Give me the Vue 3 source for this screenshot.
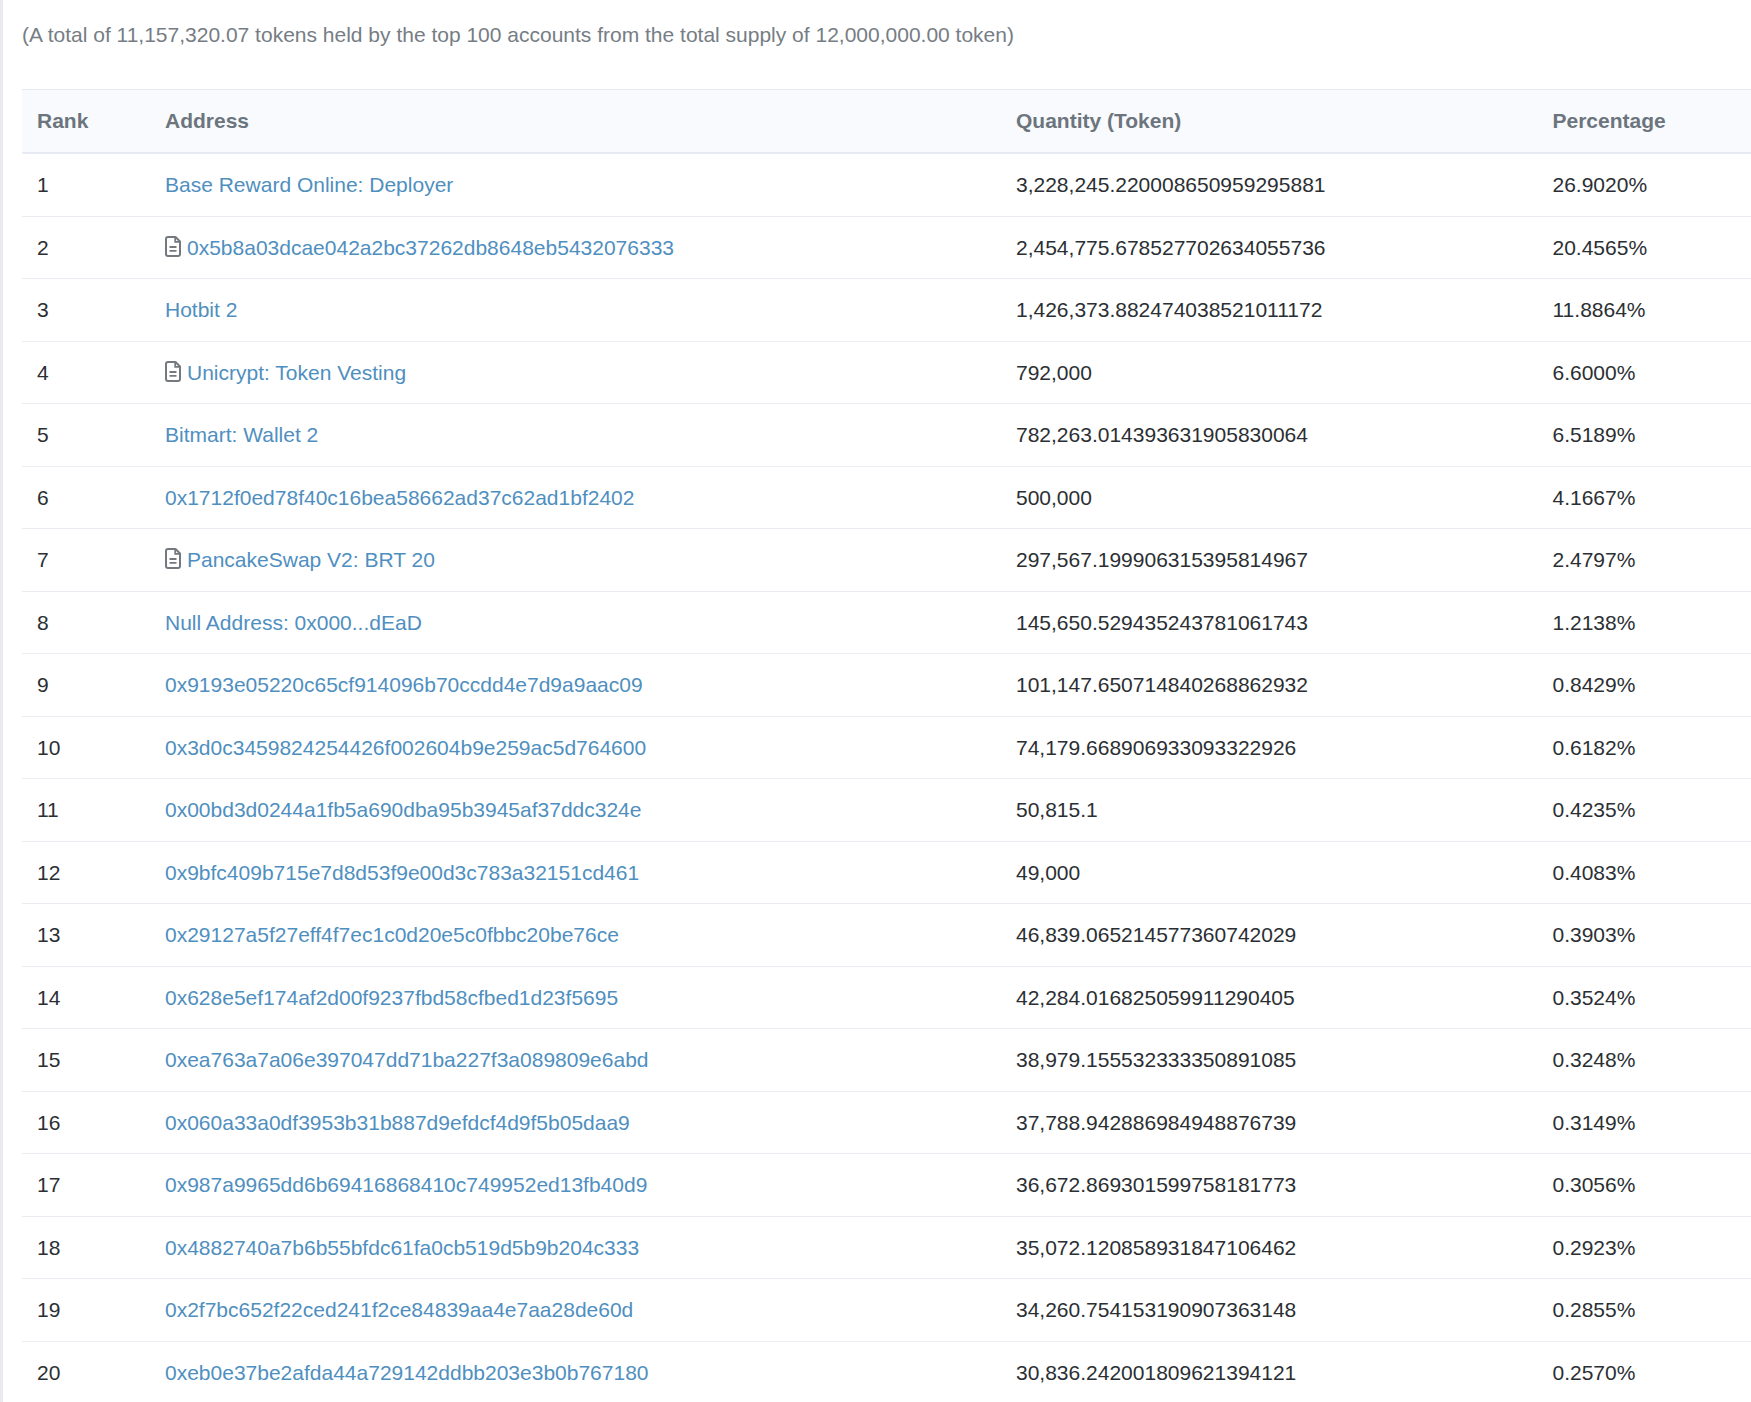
<template>
  <div class="page">
    <p class="summary">(A total of 11,157,320.07 tokens held by the top 100 accounts from the total supply of 12,000,000.00 token)</p>
    <table class="holders">
      <colgroup>
        <col class="col-rank" />
        <col class="col-address" />
        <col class="col-qty" />
        <col />
      </colgroup>
      <thead>
        <tr>
          <th>Rank</th>
          <th>Address</th>
          <th>Quantity (Token)</th>
          <th>Percentage</th>
        </tr>
      </thead>
      <tbody>
        <tr v-for="(h, i) in holders" :key="i">
          <td>{{ i + 1 }}</td>
          <td>
            <svg v-if="h.contract" class="file-icon" viewBox="0 0 16 21" fill="none" stroke="#74797f">
              <path d="M10.5 1H3a2 2 0 0 0-2 2v15a2 2 0 0 0 2 2h10a2 2 0 0 0 2-2V5.5z" stroke-width="2" stroke-linejoin="round" />
              <path d="M10.2 1.2V5.8H15" stroke-width="1.8" />
              <path d="M4.5 11h7M4.5 14.8h7" stroke-width="1.8" />
            </svg>
            <a href="#" @click.prevent>{{ h.name }}</a>
          </td>
          <td>{{ h.qty }}</td>
          <td>{{ h.pct }}</td>
        </tr>
      </tbody>
    </table>
  </div>
</template>

<script setup>
const holders = [
  { name: 'Base Reward Online: Deployer', qty: '3,228,245.220008650959295881', pct: '26.9020%' },
  { name: '0x5b8a03dcae042a2bc37262db8648eb5432076333', qty: '2,454,775.678527702634055736', pct: '20.4565%', contract: true },
  { name: 'Hotbit 2', qty: '1,426,373.882474038521011172', pct: '11.8864%' },
  { name: 'Unicrypt: Token Vesting', qty: '792,000', pct: '6.6000%', contract: true },
  { name: 'Bitmart: Wallet 2', qty: '782,263.014393631905830064', pct: '6.5189%' },
  { name: '0x1712f0ed78f40c16bea58662ad37c62ad1bf2402', qty: '500,000', pct: '4.1667%' },
  { name: 'PancakeSwap V2: BRT 20', qty: '297,567.199906315395814967', pct: '2.4797%', contract: true },
  { name: 'Null Address: 0x000...dEaD', qty: '145,650.529435243781061743', pct: '1.2138%' },
  { name: '0x9193e05220c65cf914096b70ccdd4e7d9a9aac09', qty: '101,147.650714840268862932', pct: '0.8429%' },
  { name: '0x3d0c3459824254426f002604b9e259ac5d764600', qty: '74,179.668906933093322926', pct: '0.6182%' },
  { name: '0x00bd3d0244a1fb5a690dba95b3945af37ddc324e', qty: '50,815.1', pct: '0.4235%' },
  { name: '0x9bfc409b715e7d8d53f9e00d3c783a32151cd461', qty: '49,000', pct: '0.4083%' },
  { name: '0x29127a5f27eff4f7ec1c0d20e5c0fbbc20be76ce', qty: '46,839.065214577360742029', pct: '0.3903%' },
  { name: '0x628e5ef174af2d00f9237fbd58cfbed1d23f5695', qty: '42,284.016825059911290405', pct: '0.3524%' },
  { name: '0xea763a7a06e397047dd71ba227f3a089809e6abd', qty: '38,979.155532333350891085', pct: '0.3248%' },
  { name: '0x060a33a0df3953b31b887d9efdcf4d9f5b05daa9', qty: '37,788.942886984948876739', pct: '0.3149%' },
  { name: '0x987a9965dd6b69416868410c749952ed13fb40d9', qty: '36,672.869301599758181773', pct: '0.3056%' },
  { name: '0x4882740a7b6b55bfdc61fa0cb519d5b9b204c333', qty: '35,072.120858931847106462', pct: '0.2923%' },
  { name: '0x2f7bc652f22ced241f2ce84839aa4e7aa28de60d', qty: '34,260.754153190907363148', pct: '0.2855%' },
  { name: '0xeb0e37be2afda44a729142ddbb203e3b0b767180', qty: '30,836.242001809621394121', pct: '0.2570%' }
]
</script>

<style>
html,
body {
  background: #fff;
  overflow: hidden;
}
</style>

<style scoped>
.page {
  height: 1402px;
  box-sizing: border-box;
  border-left: 3px solid #e9ebee;
  padding: 20px 0 0 19px;
  font-family: 'Liberation Sans', Arial, sans-serif;
  font-size: 21px;
  color: #2b2f33;
}
.summary {
  margin: 0 0 39px;
  line-height: 30px;
  color: #767d84;
}
.holders {
  width: 1729px;
  table-layout: fixed;
  border-collapse: separate;
  border-spacing: 0;
}
.col-rank { width: 128px; }
.col-address { width: 851px; }
.col-qty { width: 536.5px; }
th {
  height: 65px;
  padding: 0 15px;
  box-sizing: border-box;
  text-align: left;
  font-weight: 700;
  color: #6c757d;
  background: #f8fafd;
  border-top: 1px solid #e7eaf3;
  border-bottom: 2px solid #e7eaf3;
}
td {
  height: 62.5px;
  padding: 0.6px 15px 0;
  box-sizing: border-box;
  border-bottom: 1px solid #e9ecf1;
  white-space: nowrap;
}
tr:last-child td {
  border-bottom: 0;
}
a {
  color: #4f8fc0;
  text-decoration: none;
}
.file-icon {
  width: 16px;
  height: 21px;
  margin-right: 6px;
  vertical-align: -2px;
}
</style>
